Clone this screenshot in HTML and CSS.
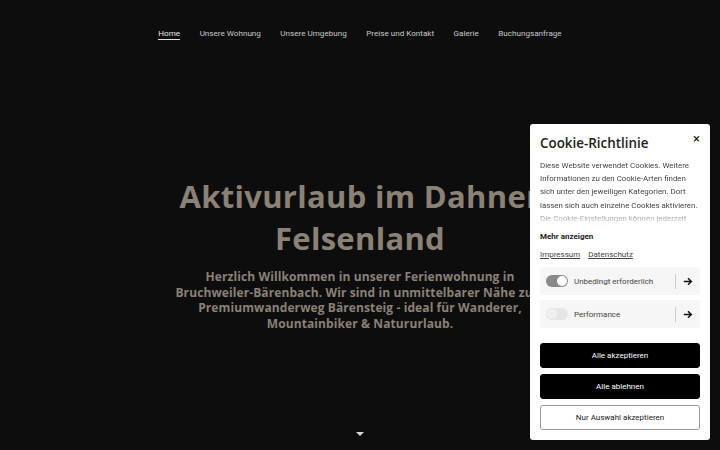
FILE: index.html
```html
<!DOCTYPE html>
<html lang="de">
<head>
<meta charset="utf-8">
<title>Aktivurlaub im Dahner Felsenland</title>
<link rel="stylesheet" href="styles.css">
</head>
<body>
<header class="topbar">
  <nav class="nav">
    <a class="nav-link active" href="#">Home</a>
    <a class="nav-link" href="#">Unsere Wohnung</a>
    <a class="nav-link" href="#">Unsere Umgebung</a>
    <a class="nav-link" href="#">Preise und Kontakt</a>
    <a class="nav-link" href="#">Galerie</a>
    <a class="nav-link" href="#">Buchungsanfrage</a>
  </nav>
</header>
<main class="hero">
  <h1 class="hero-title">Aktivurlaub im Dahner Felsenland</h1>
  <p class="hero-text">Herzlich Willkommen in unserer Ferienwohnung in Bruchweiler-Bärenbach. Wir sind in unmittelbarer Nähe zum Premiumwanderweg Bärensteig - ideal für Wanderer, Mountainbiker &amp; Natururlaub.</p>
  <div class="scroll-down"></div>
</main>

<aside class="cookie">
  <div class="cookie-head">
    <h2 class="cookie-title">Cookie-Richtlinie</h2>
    <span class="cookie-close">×</span>
  </div>
  <div class="cookie-body">
    <p>Diese Website verwendet Cookies. Weitere Informationen zu den Cookie-Arten finden sich unter den jeweiligen Kategorien. Dort lassen sich auch einzelne Cookies aktivieren. Die Cookie-Einstellungen können jederzeit</p>
  </div>
  <div class="cookie-more">Mehr anzeigen</div>
  <div class="cookie-links"><a href="#">Impressum</a><a href="#">Datenschutz</a></div>
  <div class="cookie-row">
    <span class="toggle on"></span>
    <span class="row-label">Unbedingt erforderlich</span>
    <span class="row-sep"></span>
    <svg class="row-arrow" viewBox="0 0 12 10" width="10" height="9"><path d="M1 5h9M6 1.2L10 5 6 8.8" fill="none" stroke="#111" stroke-width="1.7"/></svg>
  </div>
  <div class="cookie-row">
    <span class="toggle"></span>
    <span class="row-label">Performance</span>
    <span class="row-sep"></span>
    <svg class="row-arrow" viewBox="0 0 12 10" width="10" height="9"><path d="M1 5h9M6 1.2L10 5 6 8.8" fill="none" stroke="#111" stroke-width="1.7"/></svg>
  </div>
  <div class="cookie-buttons">
    <button class="btn btn-dark">Alle akzeptieren</button>
    <button class="btn btn-dark">Alle ablehnen</button>
    <button class="btn btn-light">Nur Auswahl akzeptieren</button>
  </div>
</aside>
</body>
</html>
```
FILE: styles.css
```css
* { box-sizing: border-box; }
html, body { margin: 0; padding: 0; }
body {
  width: 720px;
  height: 450px;
  overflow: hidden;
  background: #0e0d0d;
  font-family: Roboto, "Liberation Sans", sans-serif;
}
.topbar {
  height: 48px;
  display: flex;
  justify-content: center;
}
.nav {
  display: flex;
  gap: 19.5px;
  padding-top: 28px;
}
.nav-link {
  color: #c9c9c9;
  font-size: 8.1px;
  text-decoration: none;
  line-height: 10px;
  height: 12px;
}
.nav-link.active {
  color: #e6e6e6;
  border-bottom: 1px solid #e0e0e0;
}
.hero {
  display: flex;
  flex-direction: column;
  align-items: center;
  padding-top: 127px;
  height: 402px;
}
.hero-title {
  margin: 0;
  width: 380px;
  text-align: center;
  color: #8a8177;
  font-family: "Open Sans", sans-serif;
  font-weight: 700;
  font-size: 31px;
  line-height: 42px;
  letter-spacing: 0.3px;
}
.hero-text {
  margin: 10px 0 0;
  width: 384px;
  text-align: center;
  color: #8a8177;
  font-family: "Open Sans", sans-serif;
  font-weight: 700;
  font-size: 12px;
  line-height: 15.6px;
  letter-spacing: 0.1px;
}
.scroll-down {
  margin-top: auto;
  margin-bottom: 14px;
  width: 0; height: 0;
  border-left: 4px solid transparent;
  border-right: 4px solid transparent;
  border-top: 4px solid #d8d8d8;
}
.cookie {
  position: fixed;
  left: 530px;
  top: 124px;
  width: 180px;
  height: 316px;
  background: #fff;
  border-radius: 3px;
  padding: 10px 10px 10px;
  display: flex;
  flex-direction: column;
  font-family: Roboto, "Liberation Sans", sans-serif;
  color: #333;
}
.cookie-head {
  display: flex;
  justify-content: space-between;
  align-items: flex-start;
}
.cookie-title {
  margin: 0;
  padding-top: 1px;
  font-family: "Open Sans", sans-serif;
  font-weight: 600;
  font-size: 13.4px;
  line-height: 16px;
  color: #222;
}
.cookie-close {
  font-size: 13px;
  line-height: 10px;
  color: #111;
}
.cookie-body {
  margin-top: 8px;
  height: 66px;
  overflow: hidden;
  -webkit-mask-image: linear-gradient(to bottom, #000 0, #000 50px, rgba(0,0,0,0.15) 64px);
          mask-image: linear-gradient(to bottom, #000 0, #000 50px, rgba(0,0,0,0.15) 64px);
}
.cookie-body p {
  margin: 0;
  font-size: 7.9px;
  line-height: 13.2px;
  color: #444;
}
.cookie-more {
  margin-top: 6px;
  font-size: 8px;
  font-weight: 700;
  color: #222;
  line-height: 12px;
}
.cookie-links {
  margin-top: 6px;
  display: flex;
  gap: 8px;
  line-height: 12px;
}
.cookie-links a {
  font-size: 8px;
  color: #444;
  text-decoration: underline;
}
.cookie-row {
  margin-top: 6px;
  height: 28px;
  background: #f6f6f6;
  border-radius: 3px;
  display: flex;
  align-items: center;
  padding: 0 6px 0 6px;
}
.cookie-row + .cookie-row { margin-top: 5px; }
.toggle {
  position: relative;
  width: 22px;
  height: 12px;
  border-radius: 6px;
  background: #e6e6e6;
  flex: none;
}
.toggle::after {
  content: "";
  position: absolute;
  top: 1px;
  left: 1px;
  width: 10px;
  height: 10px;
  border-radius: 50%;
  background: #f0f0f0;
}
.toggle.on { background: #8a8a8a; }
.toggle.on::after { left: 11px; background: #fff; }
.row-label {
  margin-left: 6px;
  font-size: 8px;
  color: #444;
  flex: 1;
}
.row-sep {
  width: 1px;
  height: 15px;
  background: #ccc;
  margin-right: 7px;
}
.row-arrow { flex: none; margin-right: 1px; }
.cookie-buttons {
  margin-top: auto;
  display: flex;
  flex-direction: column;
  gap: 6px;
}
.btn {
  height: 25px;
  border-radius: 3px;
  font-family: Roboto, "Liberation Sans", sans-serif;
  font-size: 8px;
  cursor: pointer;
}
.btn-dark {
  background: #000;
  color: #fff;
  border: 1px solid #000;
}
.btn-light {
  background: #fff;
  color: #222;
  border: 1px solid #999;
}
```
